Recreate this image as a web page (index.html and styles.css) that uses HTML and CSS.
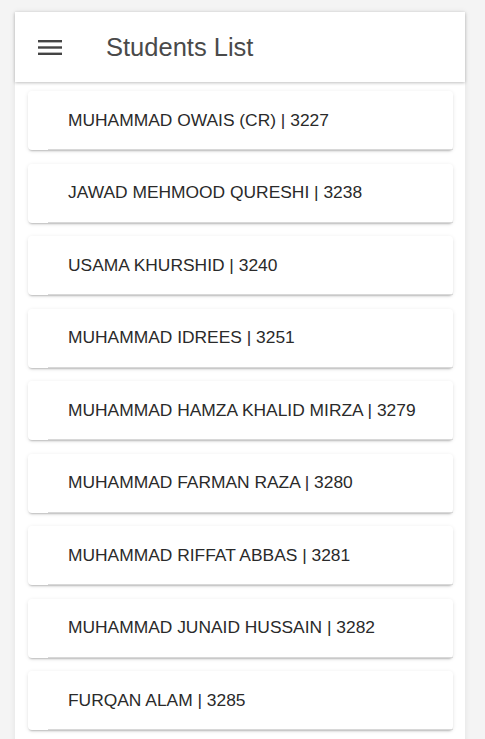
FILE: index.html
```html
<!DOCTYPE html>
<html>
<head>
<meta charset="utf-8">
<link rel="stylesheet" href="styles.css">
</head>
<body>
<div class="app">
  <header class="toolbar">
    <button class="menu" aria-label="menu">
      <svg width="24" height="24" viewBox="0 0 24 24"><rect x="0" y="5" width="24" height="2.4" fill="#444"/><rect x="0" y="11.3" width="24" height="2.4" fill="#444"/><rect x="0" y="17.6" width="24" height="2.4" fill="#444"/></svg>
    </button>
    <h1 class="title">Students List</h1>
  </header>
  <main class="list">
    <div class="card"><div class="item">MUHAMMAD OWAIS (CR) | 3227</div></div>
    <div class="card"><div class="item">JAWAD MEHMOOD QURESHI | 3238</div></div>
    <div class="card"><div class="item">USAMA KHURSHID | 3240</div></div>
    <div class="card"><div class="item">MUHAMMAD IDREES | 3251</div></div>
    <div class="card"><div class="item">MUHAMMAD HAMZA KHALID MIRZA | 3279</div></div>
    <div class="card"><div class="item">MUHAMMAD FARMAN RAZA | 3280</div></div>
    <div class="card"><div class="item">MUHAMMAD RIFFAT ABBAS | 3281</div></div>
    <div class="card"><div class="item">MUHAMMAD JUNAID HUSSAIN | 3282</div></div>
    <div class="card"><div class="item">FURQAN ALAM | 3285</div></div>
  </main>
</div>
</body>
</html>
```
FILE: styles.css
```css
html, body {
  margin: 0;
  padding: 0;
  height: 100%;
  overflow: hidden;
}
body {
  background: #f4f4f4;
  font-family: "Liberation Sans", Arial, sans-serif;
}
.app {
  margin: 12px 20px 0 15px;
  background: #fff;
  min-height: 800px;
  box-shadow: 0 0 6px rgba(0,0,0,0.08);
}
.toolbar {
  height: 70px;
  display: flex;
  align-items: center;
  background: #fff;
  box-shadow: 0 1px 3px rgba(0,0,0,0.25);
  position: relative;
  z-index: 1;
}
.menu {
  border: 0;
  background: none;
  padding: 0;
  margin: 0 0 0 23px;
  width: 24px;
  height: 24px;
  display: flex;
}
.title {
  margin: 0 0 0 44px;
  font-family: "Liberation Sans", Arial, sans-serif;
  font-weight: 400;
  font-size: 25.5px;
  color: #4a4a4a;
}
.list {
  padding: 9px 12px 0 13px;
  display: flex;
  flex-direction: column;
  gap: 13.5px;
}
.card {
  background: #fff;
  border-radius: 4px;
  height: 59px;
  padding-left: 20px;
  box-shadow: 0 2px 2px -1px rgba(0,0,0,0.22), 0 1px 4px rgba(0,0,0,0.1);
  display: flex;
}
.item {
  flex: 1;
  display: flex;
  align-items: center;
  padding-left: 20px;
  border-bottom: 1px solid #d8d8d8;
  font-size: 17.4px;
  color: #2a2a2a;
}
```
